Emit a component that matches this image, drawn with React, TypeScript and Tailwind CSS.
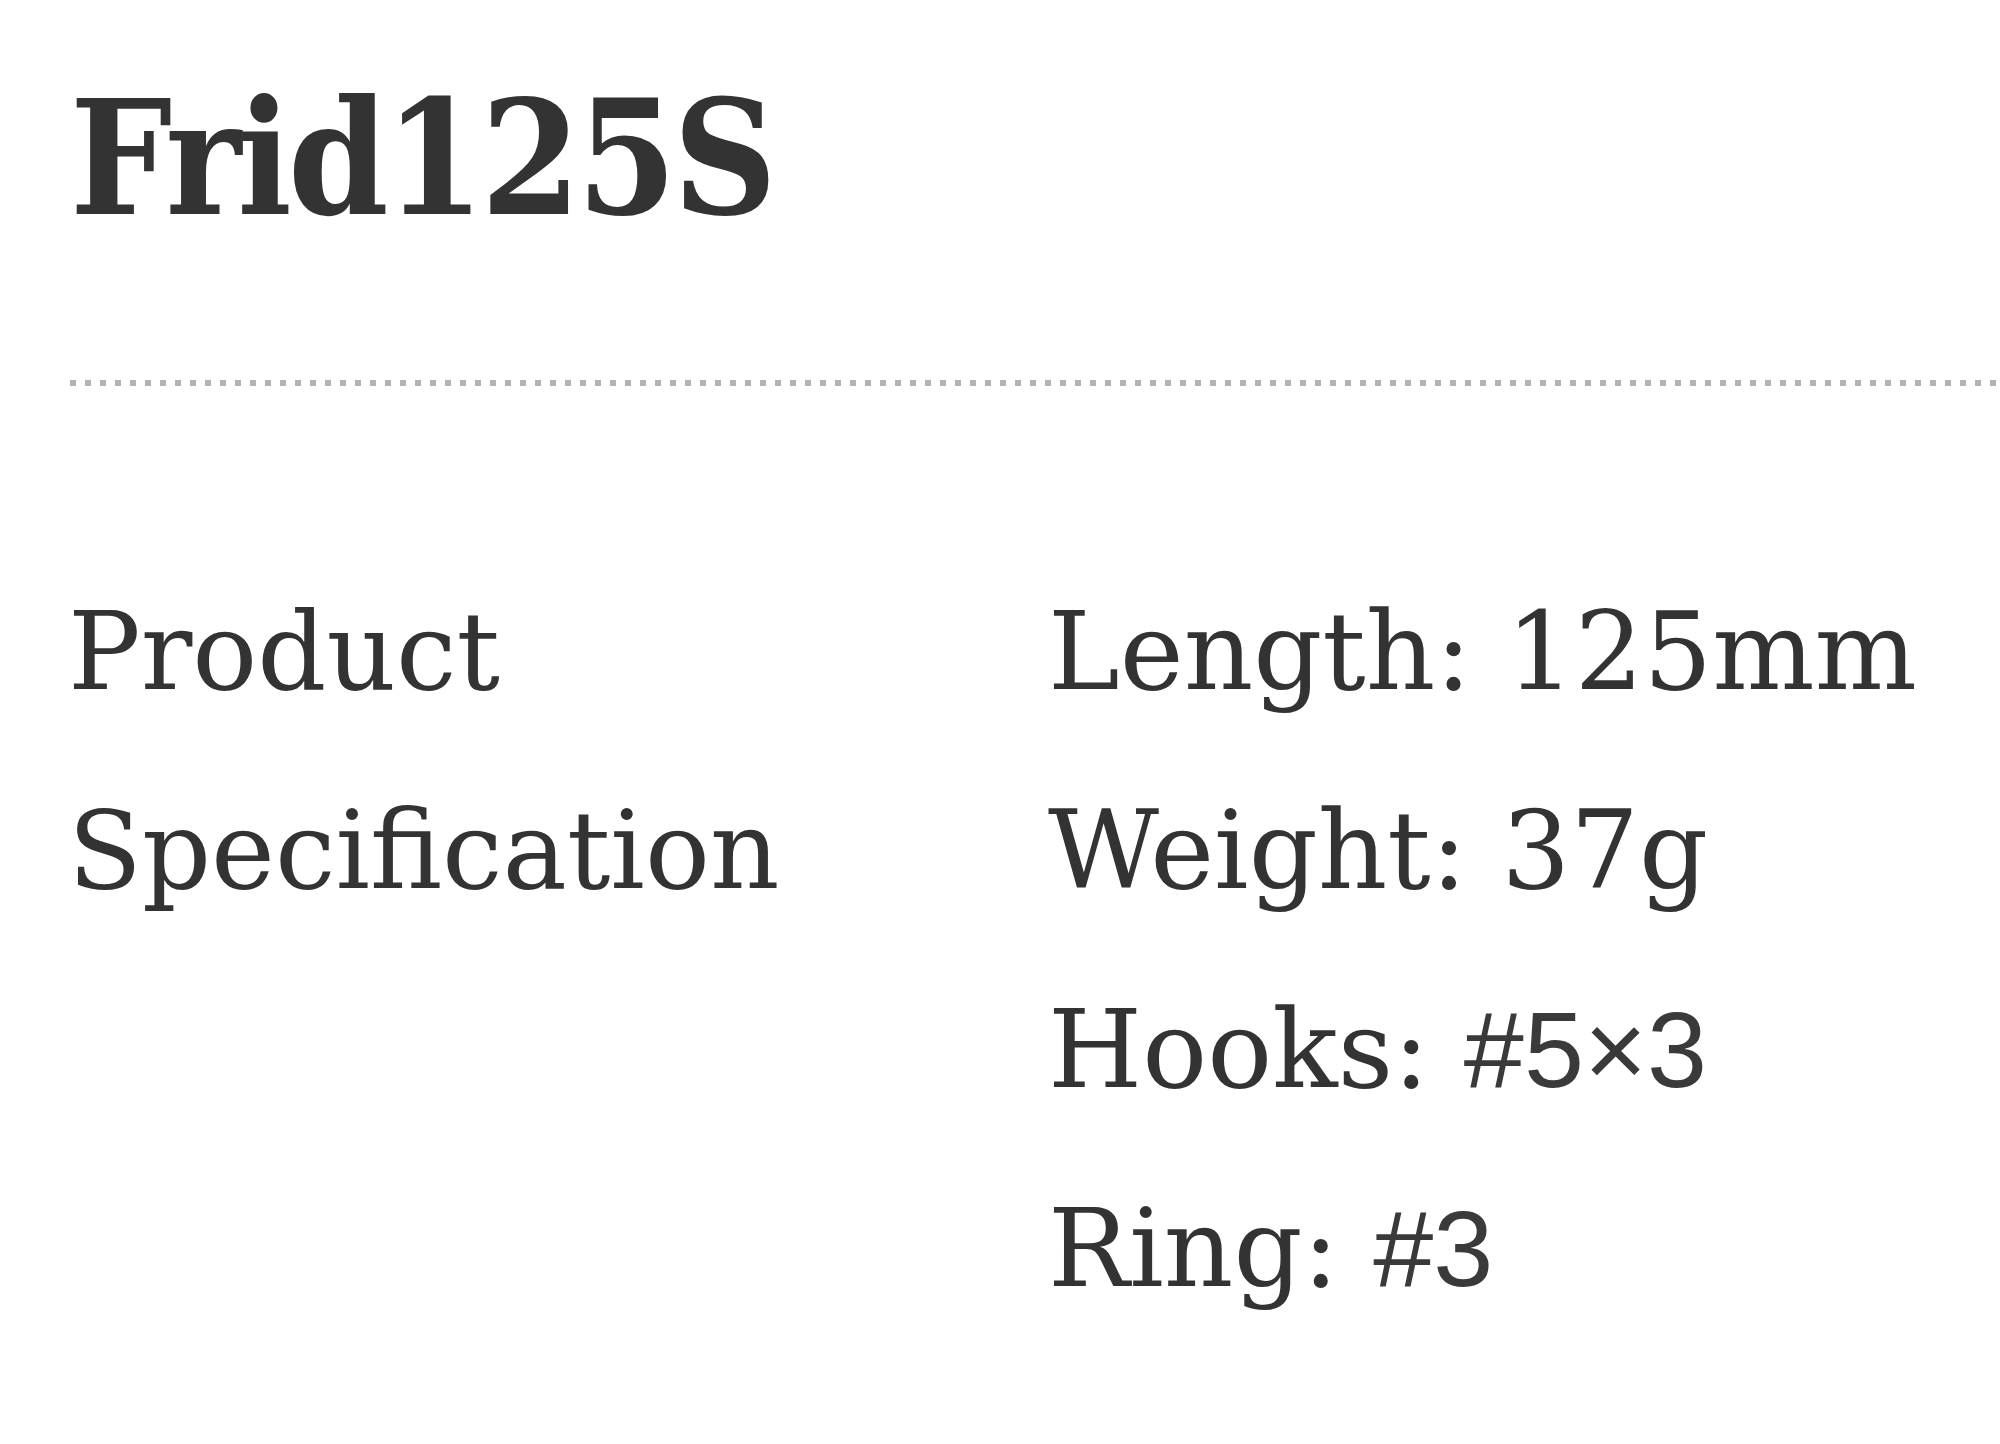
const specs: { label: string; value: string; sans?: boolean }[] = [
  { label: "Length:", value: "125mm" },
  { label: "Weight:", value: "37g" },
  { label: "Hooks:", value: "#5×3", sans: true },
  { label: "Ring:", value: "#3", sans: true },
];

export default function App() {
  return (
    <div className="min-h-screen w-full bg-white text-[#333333] font-['DejaVu_Serif',serif]">
      {/* title */}
      <section className="pl-[70px] pt-[78px]">
        <h1 className="text-[160px] font-bold leading-none tracking-[-0.025em] [font-stretch:condensed]">Frid125S</h1>
      </section>

      {/* dotted rule */}
      <div className="ml-[70px] mt-[142px] h-[6px] bg-[linear-gradient(to_right,#b3b3b3_6px,transparent_6px)] bg-[length:15px_6px] bg-repeat-x" />

      {/* spec table */}
      <section className="grid grid-cols-[980px_1fr] pl-[68px] pt-[166px] text-[108px] leading-[199px]">
        <div>
          Product
          <br />
          Specification
        </div>
        <ul>
          {specs.map((s) => (
            <li key={s.label}>
              {s.label}{" "}
              <span className={s.sans ? "font-['Liberation_Sans',sans-serif] text-[#3a3a3a]" : ""}>{s.value}</span>
            </li>
          ))}
        </ul>
      </section>
    </div>
  );
}
